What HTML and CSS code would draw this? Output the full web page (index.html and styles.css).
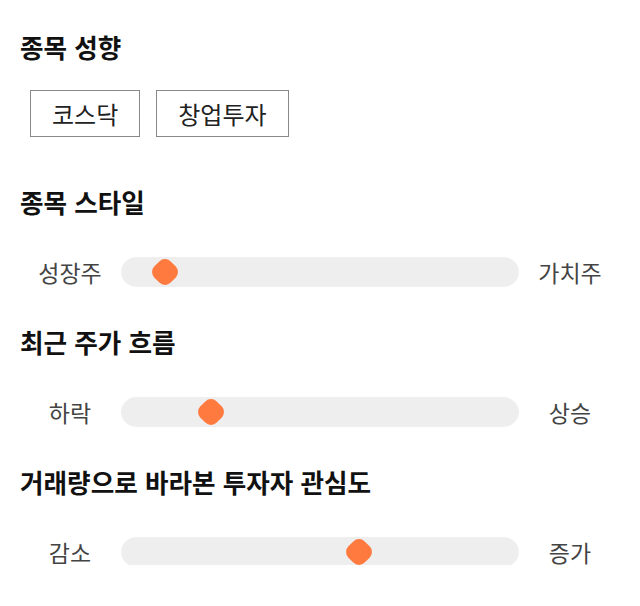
FILE: index.html
```html
<!DOCTYPE html>
<html lang="ko">
<head>
<meta charset="utf-8">
<link rel="stylesheet" href="styles.css">
</head>
<body>
<div class="page">
  <section class="group">
    <h2 class="title">종목 성향</h2>
    <div class="tags">
      <span class="tag">코스닥</span>
      <span class="tag">창업투자</span>
    </div>
  </section>
  <section class="group">
    <h2 class="title">종목 스타일</h2>
    <div class="scale">
      <span class="label">성장주</span>
      <div class="track"><span class="thumb" style="left: 11.1%"></span></div>
      <span class="label">가치주</span>
    </div>
  </section>
  <section class="group">
    <h2 class="title">최근 주가 흐름</h2>
    <div class="scale">
      <span class="label">하락</span>
      <div class="track"><span class="thumb" style="left: 22.5%"></span></div>
      <span class="label">상승</span>
    </div>
  </section>
  <section class="group">
    <h2 class="title">거래량으로 바라본 투자자 관심도</h2>
    <div class="scale">
      <span class="label">감소</span>
      <div class="track"><span class="thumb" style="left: 59.75%"></span></div>
      <span class="label">증가</span>
    </div>
  </section>
</div>
</body>
</html>
```
FILE: styles.css
```css
html, body {
  margin: 0;
  padding: 0;
  background: #ffffff;
}
.page {
  width: 600px;
  padding: 32px 20px 0;
  font-family: "Noto Sans CJK KR", "Noto Sans", sans-serif;
  color: #111;
}
.group + .group {
  margin-top: 42px;
}
.title {
  margin: 0;
  height: 30px;
  line-height: 30px;
  font-size: 25.6px;
  font-weight: 700;
  color: #111;
}
.tags {
  display: flex;
  gap: 16px;
  margin: 28px 0 0 10px;
}
.tag {
  display: flex;
  align-items: center;
  justify-content: center;
  box-sizing: border-box;
  height: 47px;
  padding: 0 21px;
  border: 1px solid #888;
  font-size: 24px;
  color: #222;
}
.group:first-child + .group {
  margin-top: 50px;
}
.scale {
  display: grid;
  grid-template-columns: 100px 400px 100px;
  align-items: center;
  margin-top: 38px;
  height: 30px;
}
.label {
  text-align: center;
  font-size: 23px;
  color: #444;
}
.track {
  position: relative;
  height: 30px;
  margin: 0 1px;
  background: #eeeeee;
  border-radius: 16px / 15px;
}
.thumb {
  position: absolute;
  top: 50%;
  width: 23px;
  height: 23px;
  background: #ff7a3f;
  border-radius: 8px;
  transform: translate(-50%, -50%) rotate(45deg);
}
```
